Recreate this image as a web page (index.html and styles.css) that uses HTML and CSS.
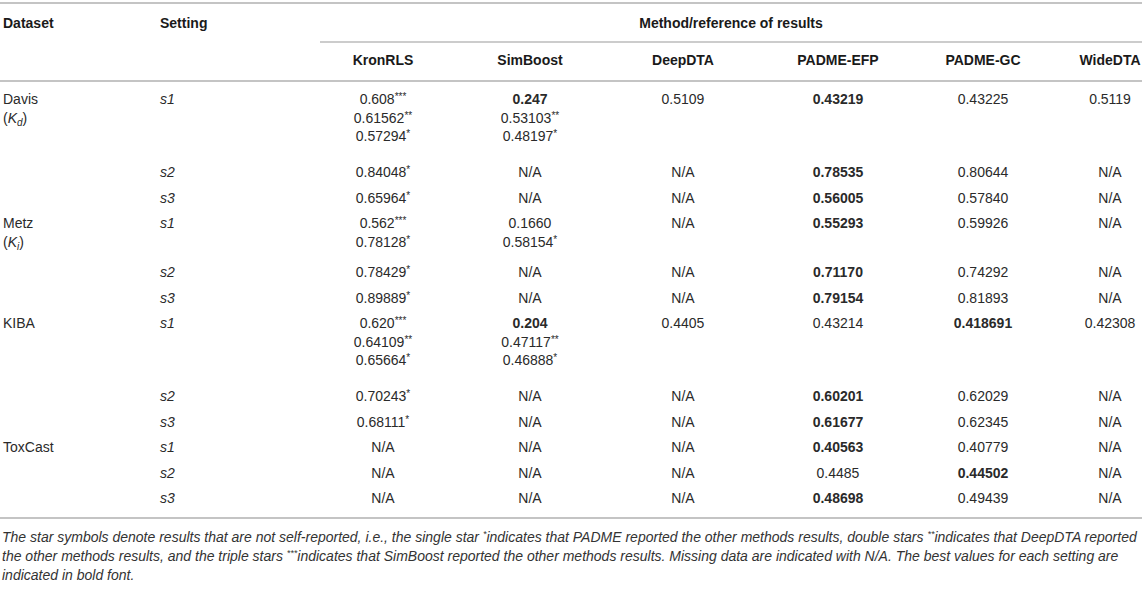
FILE: index.html
```html
<!DOCTYPE html>
<html lang="en">
<head>
<meta charset="utf-8">
<title>Results table</title>
<link rel="stylesheet" href="styles.css">
</head>
<body>
<div class="wrap">
<table class="results">
  <colgroup>
    <col class="w-ds"><col class="w-set"><col class="w-c1"><col class="w-c2"><col class="w-c3"><col class="w-c4"><col class="w-c5"><col class="w-c6">
  </colgroup>
  <thead>
    <tr class="h1">
      <th rowspan="2" class="left">Dataset</th>
      <th rowspan="2" class="left">Setting</th>
      <th colspan="6" class="span">Method/reference of results</th>
    </tr>
    <tr class="h2">
      <th>KronRLS</th><th>SimBoost</th><th>DeepDTA</th><th>PADME-EFP</th><th>PADME-GC</th><th class="last">WideDTA</th>
    </tr>
  </thead>
  <tbody>
    <tr class="first m3">
      <td class="left">Davis<br>(<i>K</i><sub>d</sub>)</td><td class="left"><i>s1</i></td>
      <td>0.608<sup>***</sup><br>0.61562<sup>**</sup><br>0.57294<sup>*</sup></td>
      <td><b>0.247</b><br>0.53103<sup>**</sup><br>0.48197<sup>*</sup></td>
      <td>0.5109</td><td><b>0.43219</b></td><td>0.43225</td><td class="last">0.5119</td>
    </tr>
    <tr>
      <td class="left"></td><td class="left"><i>s2</i></td>
      <td>0.84048<sup>*</sup></td><td>N/A</td><td>N/A</td><td><b>0.78535</b></td><td>0.80644</td><td class="last">N/A</td>
    </tr>
    <tr>
      <td class="left"></td><td class="left"><i>s3</i></td>
      <td>0.65964<sup>*</sup></td><td>N/A</td><td>N/A</td><td><b>0.56005</b></td><td>0.57840</td><td class="last">N/A</td>
    </tr>
    <tr class="m2">
      <td class="left">Metz<br>(<i>K</i><sub>i</sub>)</td><td class="left"><i>s1</i></td>
      <td>0.562<sup>***</sup><br>0.78128<sup>*</sup></td>
      <td>0.1660<br>0.58154<sup>*</sup></td>
      <td>N/A</td><td><b>0.55293</b></td><td>0.59926</td><td class="last">N/A</td>
    </tr>
    <tr>
      <td class="left"></td><td class="left"><i>s2</i></td>
      <td>0.78429<sup>*</sup></td><td>N/A</td><td>N/A</td><td><b>0.71170</b></td><td>0.74292</td><td class="last">N/A</td>
    </tr>
    <tr>
      <td class="left"></td><td class="left"><i>s3</i></td>
      <td>0.89889<sup>*</sup></td><td>N/A</td><td>N/A</td><td><b>0.79154</b></td><td>0.81893</td><td class="last">N/A</td>
    </tr>
    <tr class="m3">
      <td class="left">KIBA</td><td class="left"><i>s1</i></td>
      <td>0.620<sup>***</sup><br>0.64109<sup>**</sup><br>0.65664<sup>*</sup></td>
      <td><b>0.204</b><br>0.47117<sup>**</sup><br>0.46888<sup>*</sup></td>
      <td>0.4405</td><td>0.43214</td><td><b>0.418691</b></td><td class="last">0.42308</td>
    </tr>
    <tr>
      <td class="left"></td><td class="left"><i>s2</i></td>
      <td>0.70243<sup>*</sup></td><td>N/A</td><td>N/A</td><td><b>0.60201</b></td><td>0.62029</td><td class="last">N/A</td>
    </tr>
    <tr>
      <td class="left"></td><td class="left"><i>s3</i></td>
      <td>0.68111<sup>*</sup></td><td>N/A</td><td>N/A</td><td><b>0.61677</b></td><td>0.62345</td><td class="last">N/A</td>
    </tr>
    <tr>
      <td class="left">ToxCast</td><td class="left"><i>s1</i></td>
      <td>N/A</td><td>N/A</td><td>N/A</td><td><b>0.40563</b></td><td>0.40779</td><td class="last">N/A</td>
    </tr>
    <tr>
      <td class="left"></td><td class="left"><i>s2</i></td>
      <td>N/A</td><td>N/A</td><td>N/A</td><td>0.4485</td><td><b>0.44502</b></td><td class="last">N/A</td>
    </tr>
    <tr class="end">
      <td class="left"></td><td class="left"><i>s3</i></td>
      <td>N/A</td><td>N/A</td><td>N/A</td><td><b>0.48698</b></td><td>0.49439</td><td class="last">N/A</td>
    </tr>
  </tbody>
</table>
<p class="note">The star symbols denote results that are not self-reported, i.e., the single star <sup>*</sup>indicates that PADME reported the other methods results, double stars <sup>**</sup>indicates that DeepDTA reported the other methods results, and the triple stars <sup>***</sup>indicates that SimBoost reported the other methods results. Missing data are indicated with N/A. The best values for each setting are indicated in bold font.</p>
</div>
</body>
</html>
```

FILE: styles.css
```css
html, body {
  margin: 0;
  padding: 0;
  background: #ffffff;
}

body {
  font-family: "Liberation Sans", Arial, Helvetica, sans-serif;
  color: #2a2a2a;
}

.wrap {
  padding-top: 2px;
  width: 1142px;
}

.results {
  width: 1142px;
  table-layout: fixed;
  border-collapse: separate;
  border-spacing: 0;
  font-size: 14px;
  line-height: 21px;
}

.w-ds { width: 157px; }
.w-set { width: 163px; }
.w-c1 { width: 126px; }
.w-c2 { width: 168px; }
.w-c3 { width: 138px; }
.w-c4 { width: 172px; }
.w-c5 { width: 118px; }
.w-c6 { width: 100px; }

.results th,
.results td {
  padding: 0;
  text-align: center;
  vertical-align: top;
  white-space: nowrap;
}

.results th {
  font-weight: bold;
  color: #1a1a1a;
}

.results .left {
  text-align: left;
  padding-left: 3px;
}

.results .last {
  padding-left: 36px;
}

.h1 th {
  border-top: 2px solid #c4c4c4;
  padding-top: 8.5px;
  padding-bottom: 7.5px;
}

.h1 th.left {
  border-bottom: 2px solid #c4c4c4;
}

.h1 th.span {
  border-bottom: 2px solid #cccccc;
}

.h2 th {
  padding-top: 6.5px;
  padding-bottom: 9.5px;
  border-bottom: 2px solid #c4c4c4;
}

.results td {
  line-height: 18.5px;
  padding-top: 3.5px;
  padding-bottom: 3.5px;
}

.results tr.first td {
  padding-top: 8.25px;
}

.results tr.m2 td {
  padding-bottom: 8.7px;
}

.results tr.m3 td {
  padding-bottom: 13.9px;
}

.results tr.end td {
  padding-bottom: 9.25px;
  border-bottom: 2px solid #c4c4c4;
}

.results sup {
  font-size: 10px;
  line-height: 0;
  vertical-align: 4px;
}

.results sub {
  font-size: 10px;
  line-height: 0;
  vertical-align: -3px;
  font-style: italic;
}

.note {
  margin: 9.5px 0 0 2px;
  font-style: italic;
  font-size: 14px;
  line-height: 19px;
  color: #333333;
}

.note sup {
  font-size: 9px;
  line-height: 0;
  vertical-align: 5px;
}
```
